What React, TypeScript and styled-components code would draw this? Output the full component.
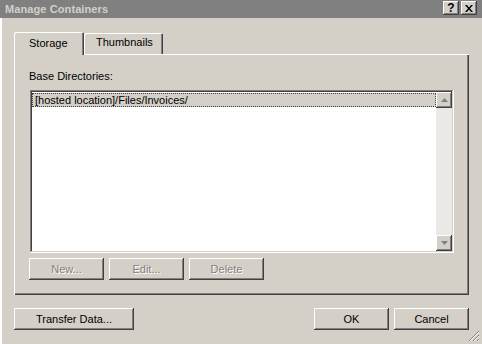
import React from 'react'
import styled, { createGlobalStyle } from 'styled-components'

const GlobalStyle = createGlobalStyle`
    html, body {
        margin: 0;
        padding: 0;
        background: #d4d0c8;
    }
    * {
        box-sizing: border-box;
    }
`

const raised = `
    box-shadow: inset -1px -1px #404040, inset 1px 1px #ffffff, inset -2px -2px #808080, inset 2px 2px #d4d0c8;
`

const Window = styled.div`
    position: relative;
    width: 482px;
    height: 344px;
    display: flex;
    flex-direction: column;
    background: #d4d0c8;
    font-family: "Liberation Sans", Arial, sans-serif;
    font-size: 11px;
    color: #000000;
    overflow: hidden;
`

const TitleBar = styled.div`
    height: 18px;
    flex: none;
    display: flex;
    align-items: center;
    justify-content: space-between;
    background: #808080;
    padding: 0 5px 0 5px;
`

const Caption = styled.span`
    color: #d4d0c8;
    font-weight: bold;
    font-size: 11px;
    letter-spacing: 0.1px;
`

const CaptionButtons = styled.div`
    display: flex;
    gap: 2px;
    margin-top: -2px;
`

const CapButton = styled.div`
    width: 16px;
    height: 14px;
    display: flex;
    align-items: center;
    justify-content: center;
    background: #d4d0c8;
    font-weight: bold;
    font-size: 12px;
    line-height: 1;
    ${raised}
`

const Body = styled.div`
    flex: 1;
    display: flex;
    flex-direction: column;
    padding: 13px 13px 0 14px;
    box-shadow: inset 2px 0 #ffffff, inset 1px 0 #d4d0c8;
`

const TabRow = styled.div`
    display: flex;
    align-items: flex-end;
    height: 23px;
`

const Tab = styled.div<{ $active?: boolean; $width: number }>`
    position: relative;
    z-index: ${p => (p.$active ? 2 : 1)};
    width: ${p => p.$width}px;
    height: ${p => (p.$active ? 23 : 21)}px;
    margin-bottom: ${p => (p.$active ? -1 : 0)}px;
    padding-top: ${p => (p.$active ? 5 : 3)}px;
    padding-left: ${p => (p.$active ? 15 : 12)}px;
    background: #d4d0c8;
    border-top-left-radius: 2px;
    border-top-right-radius: 2px;
    box-shadow: inset 1px 1px #ffffff, inset -1px 0 #404040, inset -2px 0 #808080;
`

const TabPanel = styled.div`
    width: 455px;
    height: 241px;
    display: flex;
    flex-direction: column;
    padding: 16px 0 0 15px;
    box-shadow: inset 1px 1px #ffffff, inset -1px -1px #404040, inset -2px -2px #808080;
`

const Label = styled.div`
    height: 13px;
    line-height: 13px;
    margin-bottom: 7px;
`

const ListBox = styled.div`
    width: 424px;
    height: 163px;
    margin-left: 1px;
    padding: 2px;
    display: flex;
    background: #ffffff;
    box-shadow: inset -1px -1px #ffffff, inset 1px 1px #808080, inset -2px -2px #d4d0c8, inset 2px 2px #404040;
`

const Items = styled.div`
    flex: 1;
    display: flex;
    flex-direction: column;
`

const Row = styled.div<{ $selected?: boolean }>`
    height: 14px;
    line-height: 12px;
    padding-left: 2px;
    margin-top: 1px;
    background: ${p => (p.$selected ? '#d4d0c8' : 'transparent')};
    border: 1px dotted ${p => (p.$selected ? '#404040' : 'transparent')};
`

const ScrollBar = styled.div`
    width: 16px;
    display: flex;
    flex-direction: column;
    background: #ebe9e5;
`

const ScrollTrack = styled.div`
    flex: 1;
`

const ScrollButton = styled.div`
    width: 16px;
    height: 16px;
    display: flex;
    align-items: center;
    justify-content: center;
    background: #d4d0c8;
    ${raised}
`

const ButtonRow = styled.div`
    display: flex;
    gap: 5px;
    margin-top: 5px;
`

const Button = styled.div<{ $width?: number; $disabled?: boolean }>`
    width: ${p => p.$width ?? 75}px;
    height: 22px;
    display: flex;
    align-items: center;
    justify-content: center;
    background: #d4d0c8;
    color: ${p => (p.$disabled ? '#808080' : '#000000')};
    text-shadow: ${p => (p.$disabled ? '1px 1px #ffffff' : 'none')};
    ${raised}
`

const Footer = styled.div`
    display: flex;
    align-items: center;
    margin-top: 13px;
    width: 455px;
`

const Spacer = styled.div`
    flex: 1;
`

const FooterButtons = styled.div`
    display: flex;
    gap: 5px;
`

const SizeGrip = styled.svg`
    position: absolute;
    right: 2px;
    bottom: 2px;
`

function Arrow({ up }: { up?: boolean }) {
  return (
    <svg width="7" height="4" viewBox="0 0 7 4">
      {up ? (
        <polygon points="3.5,0 7,4 0,4" fill="#808080" />
      ) : (
        <polygon points="0,0 7,0 3.5,4" fill="#808080" />
      )}
    </svg>
  )
}

export default function App() {
  return (
    <>
      <GlobalStyle />
      <Window>
        <TitleBar>
          <Caption>Manage Containers</Caption>
          <CaptionButtons>
            <CapButton>?</CapButton>
            <CapButton>
              <svg width="8" height="7" viewBox="0 0 8 7">
                <path d="M0 0 L2 0 L4 2.5 L6 0 L8 0 L5 3.5 L8 7 L6 7 L4 4.5 L2 7 L0 7 L3 3.5 Z" fill="#000" />
              </svg>
            </CapButton>
          </CaptionButtons>
        </TitleBar>

        <Body>
          <TabRow>
            <Tab $active $width={70}>Storage</Tab>
            <Tab $width={79}>Thumbnails</Tab>
          </TabRow>

          <TabPanel>
            <Label>Base Directories:</Label>
            <ListBox>
              <Items>
                <Row $selected>[hosted location]/Files/Invoices/</Row>
              </Items>
              <ScrollBar>
                <ScrollButton><Arrow up /></ScrollButton>
                <ScrollTrack />
                <ScrollButton><Arrow /></ScrollButton>
              </ScrollBar>
            </ListBox>
            <ButtonRow>
              <Button $disabled>New...</Button>
              <Button $disabled>Edit...</Button>
              <Button $disabled>Delete</Button>
            </ButtonRow>
          </TabPanel>

          <Footer>
            <Button $width={120}>Transfer Data...</Button>
            <Spacer />
            <FooterButtons>
              <Button>OK</Button>
              <Button>Cancel</Button>
            </FooterButtons>
          </Footer>
        </Body>

        <SizeGrip width="12" height="12" viewBox="0 0 12 12">
          <path d="M11 1 L1 11 M11 5 L5 11 M11 9 L9 11" stroke="#808080" strokeWidth="1" />
          <path d="M11 2 L2 11 M11 6 L6 11 M11 10 L10 11" stroke="#ffffff" strokeWidth="1" />
        </SizeGrip>
      </Window>
    </>
  )
}
